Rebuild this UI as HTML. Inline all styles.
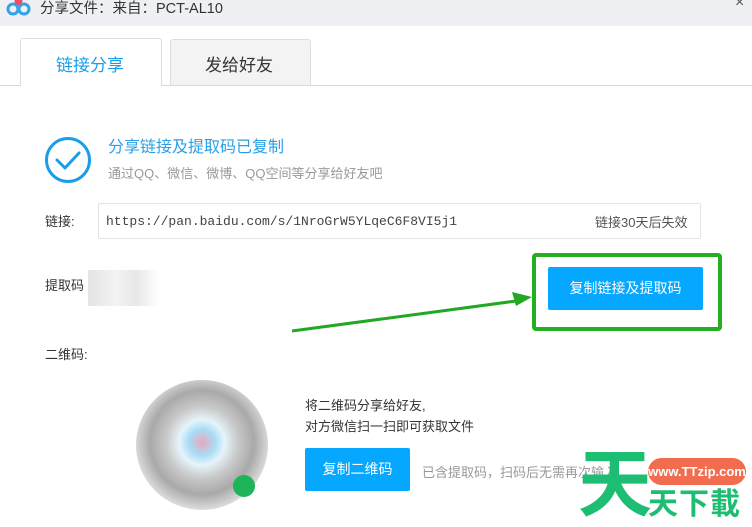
<!DOCTYPE html>
<html><head><meta charset="utf-8"><style>
*{margin:0;padding:0;box-sizing:border-box}
body{width:752px;height:527px;overflow:hidden;background:#fff;font-family:"Liberation Sans","Noto Sans CJK SC",sans-serif;position:relative;color:#333}
.a{position:absolute;white-space:nowrap}
</style></head><body>
<div class="a" style="left:0;top:0;width:752px;height:26px;background:#eef0f4"></div>
<svg class="a" style="left:6px;top:-4px" width="26" height="22" viewBox="0 0 26 22"><circle cx="7" cy="13" r="5" fill="none" stroke="#2fa4ec" stroke-width="3"/><circle cx="18" cy="13" r="5" fill="none" stroke="#2fa4ec" stroke-width="3"/><circle cx="12.5" cy="5" r="4" fill="#ef4a6a"/></svg>
<div class="a" style="left:40px;top:-3px;font-size:14.5px;color:#333">分享文件：来自：PCT-AL10</div>
<div class="a" style="left:735px;top:-6px;font-size:16px;color:#555">×</div>
<div class="a" style="left:0;top:85px;width:752px;height:1px;background:#d8d8d8"></div>
<div class="a" style="left:20px;top:38px;width:142px;height:48px;background:#fff;border:1px solid #ddd;border-bottom:none;border-radius:3px 3px 0 0"></div>
<div class="a" style="left:56px;top:51px;font-size:17px;color:#1a9ee9">链接分享</div>
<div class="a" style="left:170px;top:39px;width:141px;height:46px;background:#f3f3f3;border:1px solid #ddd;border-bottom:none;border-radius:3px 3px 0 0"></div>
<div class="a" style="left:205px;top:51px;font-size:17px;color:#333">发给好友</div>
<svg class="a" style="left:44px;top:136px" width="48" height="48"><circle cx="24" cy="24" r="21.5" fill="none" stroke="#1a9ee9" stroke-width="3"/><path d="M13 24 L21 32 L35 17" fill="none" stroke="#1a9ee9" stroke-width="3" stroke-linecap="round" stroke-linejoin="round"/></svg>
<div class="a" style="left:108px;top:133px;font-size:16px;color:#2a9fe6">分享链接及提取码已复制</div>
<div class="a" style="left:108px;top:163px;font-size:13px;color:#999">通过QQ、微信、微博、QQ空间等分享给好友吧</div>
<div class="a" style="left:45px;top:211px;font-size:13px;color:#333">链接:</div>
<div class="a" style="left:98px;top:203px;width:603px;height:36px;border:1px solid #e3e3e3;border-radius:2px"></div>
<div class="a" style="left:106px;top:214px;font-size:13px;font-family:'Liberation Mono',monospace;color:#444">https://pan.baidu.com/s/1NroGrW5YLqeC6F8VI5j1</div>
<div class="a" style="left:595px;top:212px;font-size:13px;color:#555">链接30天后失效</div>
<div class="a" style="left:45px;top:275px;font-size:13px;color:#333">提取码</div>
<div class="a" style="left:88px;top:270px;width:70px;height:36px;background:linear-gradient(90deg,#d8d8d8,#eee 40%,#ddd 70%,#fff);opacity:.7;border-radius:2px"></div>
<div class="a" style="left:532px;top:253px;width:190px;height:78px;border:4px solid #22b022;border-radius:4px"></div>
<div class="a" style="left:548px;top:267px;width:155px;height:43px;background:#06a7ff;border-radius:2px;color:#fff;font-size:14px;text-align:center;line-height:43px">复制链接及提取码</div>
<svg class="a" style="left:0;top:0" width="752" height="527"><path d="M292 331 L516 301" stroke="#22a822" stroke-width="3"/><path d="M532 297 L512 292 L516 306 Z" fill="#22a822"/></svg>
<div class="a" style="left:45px;top:344px;font-size:13px;color:#333">二维码:</div>
<div class="a" style="left:136px;top:380px;width:132px;height:130px;border-radius:50%;background:radial-gradient(circle at 50% 48%,#e8a8bc 0,#a9dcf5 14%,#e6f4fb 24%,#c9c9c9 38%,#a9a9a9 55%,#dedede 72%,#fff 80%)"></div>
<div class="a" style="left:233px;top:475px;width:22px;height:22px;border-radius:50%;background:#1db45a"></div>
<div class="a" style="left:305px;top:395px;font-size:13px;color:#333">将二维码分享给好友,</div>
<div class="a" style="left:305px;top:416px;font-size:13px;color:#333">对方微信扫一扫即可获取文件</div>
<div class="a" style="left:305px;top:448px;width:105px;height:43px;background:#06a7ff;border-radius:2px;color:#fff;font-size:14px;text-align:center;line-height:43px">复制二维码</div>
<div class="a" style="left:422px;top:462px;font-size:13px;color:#999">已含提取码，扫码后无需再次输入</div>
<div class="a" style="left:578px;top:448px;font-size:74px;font-weight:bold;color:#1dbd74;line-height:74px">天</div>
<div class="a" style="left:648px;top:458px;width:98px;height:27px;background:#f26d50;border-radius:14px;color:#fff;font-weight:bold;font-size:13px;text-align:center;line-height:27px">www.TTzip.com</div>
<div class="a" style="left:648px;top:487px;font-size:30px;font-weight:bold;color:#1dbd74;line-height:36px;letter-spacing:1px">天下載</div>
</body></html>
